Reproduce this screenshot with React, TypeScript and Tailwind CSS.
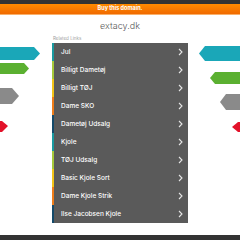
import React from "react";

const links = [
  { t: "Jul", c: "#1a9aa0" },
  { t: "Billigt Dametøj", c: "#a6c93a" },
  { t: "Billigt TØJ", c: "#f2c418" },
  { t: "Dame SKO", c: "#ef7d1a" },
  { t: "Dametøj Udsalg", c: "#144a6a" },
  { t: "Kjole", c: "#1a9aa0" },
  { t: "TØJ Udsalg", c: "#a6c93a" },
  { t: "Basic Kjole Sort", c: "#f2c418" },
  { t: "Dame Kjole Strik", c: "#ef7d1a" },
  { t: "Ilse Jacobsen Kjole", c: "#144a6a" },
];

function Chevron() {
  return (
    <svg width="5" height="8" viewBox="0 0 5 8" className="shrink-0">
      <path d="M1 1 L4 4 L1 7" fill="none" stroke="#e6e6e6" strokeWidth="1.1" />
    </svg>
  );
}

export default function App() {
  return (
    <div className="relative w-[240px] h-[240px] overflow-hidden bg-white flex flex-col" style={{ fontFamily: "Inter, 'Open Sans', sans-serif" }}>
      <svg className="absolute left-0 top-0" width="240" height="240" viewBox="0 0 240 240">
        <polygon points="0,47 34,47 40,53.5 34,60 0,60" fill="#1aa7b8" />
        <polygon points="0,63 24,63 29,68.5 24,74 0,74" fill="#5bb031" />
        <polygon points="0,88 12,88 19,96 12,104 0,104" fill="#8a8a8a" />
        <polygon points="0,121 2,121 8,126 2,132 0,132" fill="#e3122a" />
        <polygon points="240,46 205,46 199,53.5 205,61 240,61" fill="#1aa7b8" />
        <polygon points="240,72 215,72 210,78 215,84 240,84" fill="#5bb031" />
        <polygon points="240,94 226,94 220,102 226,110 240,110" fill="#8a8a8a" />
        <polygon points="240,122 238,122 232,127 238,132 240,132" fill="#e3122a" />
      </svg>
      <div className="h-[4px] bg-[#333333] shrink-0" />
      <div className="h-[11px] shrink-0 bg-gradient-to-b from-[#ff8a00] to-[#f06a00] border-b border-[#f9b06a] flex items-center justify-center">
        <span className="text-[5.5px] font-bold text-white leading-none">Buy this domain.</span>
      </div>
      <div className="relative flex flex-col items-center pt-[5px]">
        <div className="text-[9px] leading-[12px] font-light text-[#5a5a5a]">extacy.dk</div>
      </div>
      <div className="relative w-[136px] ml-[52px] mt-[4px]">
        <div className="text-[4.5px] leading-[6px] text-[#a0a0a0] pl-[1px]">Related Links</div>
        <div className="mt-[1px] flex flex-col bg-[#5a5a5a]">
          {links.map((l) => (
            <div key={l.t} className="h-[18px] flex items-center">
              <div className="w-[2px] h-full" style={{ background: l.c }} />
              <div className="flex-1 flex items-center justify-between pl-[7px] pr-[5px]">
                <span className="text-[6.5px] font-medium text-white leading-none">{l.t}</span>
                <Chevron />
              </div>
            </div>
          ))}
        </div>
      </div>
      <div className="flex-1" />
      <div className="relative h-[5px] bg-[#333333] shrink-0" />
    </div>
  );
}
